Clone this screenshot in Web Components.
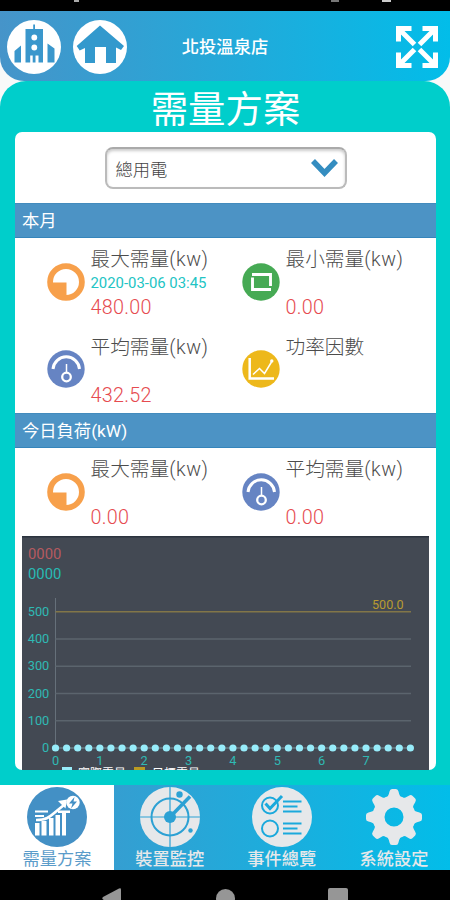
<!DOCTYPE html>
<html lang="zh-Hant">
<head>
<meta charset="utf-8">
<title>需量方案</title>
<style>
html,body{margin:0;padding:0}
body{width:450px;height:900px;overflow:hidden;background:#f8f9f9;font-family:Roboto,"Noto Sans CJK TC",sans-serif}
</style>
</head>
<body>
<energy-app></energy-app>
<script>
const define = (name, html) => {
  const t = document.createElement('template');
  t.innerHTML = html;
  customElements.define(name, class extends HTMLElement {
    constructor() {
      super();
      this.attachShadow({mode: 'open'}).append(t.content.cloneNode(true));
    }
  });
};

const ICONS = {
  building: ['0 0 54 54', `<circle cx="27" cy="27" r="27" fill="#fff"/><path fill="#3a97cc" d="M26.2 4.500h1.800V9h8v33.500h-4.500v-7h-3v7h-2.800v-7h-2.500v7h-4.700V9h7.700zM7.500 31l6.500-5.500v17H7.500zM40.500 23.500l7 5v14h-7z"/><g fill="#fff"><circle cx="27.300" cy="17.500" r="2.900"/><circle cx="27.300" cy="27.500" r="2.900"/></g>`],
  home: ['0 0 54 54', `<circle cx="27" cy="27" r="27" fill="#fff"/><path fill="#3399cd" d="M27 5.500L51 26l-3 4-5-2.500v15.500H33V27H22v16H12V28l-5.300 2.500-3-4.500z"/>`],
  expand: ['0 0 42 42', `<g fill="none" stroke="#fff" stroke-width="5"><path d="M2.500 15.500v-13h13M3 3l15.500 15.500M26.500 2.500h13v13M39 3L23.500 18.500M2.500 26.500v13h13M3 39l15.500-15.500M26.500 39.500h13v-13M39 39L23.500 23.500"/></g>`],
  pie: ['0 0 38 38', `<circle cx="19" cy="19" r="15.900" fill="#fff" stroke="#f7a04b" stroke-width="5.800"/><path fill="#f7a04b" d="M4 19.500h15.500V34C10 35 4 28 4 19.500z"/>`],
  square: ['0 0 38 38', `<circle cx="19" cy="19" r="18.700" fill="#46aa54"/><path fill="none" stroke="#fff" stroke-width="2.900" d="M10.500 14.500v12H29M10 11.500h18.500V23"/>`],
  gauge: ['0 0 38 38', `<circle cx="19" cy="19" r="18.700" fill="#6684c3"/><g fill="none" stroke="#fff"><path stroke-width="3" d="M6 19a13.300 13.300 0 0 1 26.500 0"/><path stroke-width="1.500" d="M19.500 14v9"/><circle stroke-width="2.300" cx="19.500" cy="27" r="4.300"/></g>`],
  trend: ['0 0 38 38', `<circle cx="19" cy="19" r="18.700" fill="#edb81b"/><g fill="none" stroke="#fff"><path stroke-width="2.500" d="M7.700 8v20.500H32"/><path stroke-width="1.500" d="M11 24.500l6.500-6 5 5L29.500 12"/></g><circle cx="29.800" cy="11" r="1.700" fill="#fff"/>`],
  chevron: ['0 0 27 19', `<path d="M2 3l11.500 12L25 3" fill="none" stroke="#348dc0" stroke-width="5.500"/>`],
  demand: ['0 0 60 60', `<circle cx="30" cy="30" r="30" fill="#4390c5"/><g fill="#fff"><path d="M8 36h4.500v12.500H8zM14.500 34h5v14.500h-5zM22 31h4.500v17.500H22zM28.500 28h4.500v20.500h-4.500zM35 25h4v23.500h-4zM8 23.500h13v2H8zM8 28h9v2H8zM31 23.500h12v2.500H31z"/><circle cx="46" cy="15.500" r="6.700"/><path d="M31 14l9-1.500-1.500 9z"/></g><path d="M9 33c13 0 14-4 28-15" fill="none" stroke="#fff" stroke-width="2.700"/><path d="M47.500 10l-5.500 6.500h3.500l-1.500 5 6-7H46.500z" fill="#4390c5"/>`],
  radar: ['0 0 60 60', `<circle cx="30" cy="30" r="30" fill="#e6e8ea"/><g stroke="#2ca1d4" fill="none"><path stroke-width="1.200" d="M30 0v60M0 30h60"/><circle cx="30" cy="30" r="18.500" stroke-width="2"/><path stroke-width="3.500" d="M32 28L50 9.500"/></g><g fill="#2ca1d4"><circle cx="30" cy="30" r="6"/><circle cx="39.500" cy="7.500" r="3.200"/><circle cx="50.500" cy="43.500" r="2.200"/></g>`],
  checklist: ['0 0 60 60', `<circle cx="30" cy="30" r="30" fill="#e6e8ea"/><g fill="none" stroke="#1aa9dc" stroke-width="2"><circle cx="18" cy="18.500" r="8"/><circle cx="18" cy="41.500" r="8"/><path stroke-width="3" d="M13.500 16.500l4.500 5L30 9"/><path d="M31 14.500h18.500M31 19.500h14.500M31 24.500h18.500M31 36.500h18.500M31 41.500h14.500M31 46.500h18.500"/></g>`],
  gear: ['0 0 60 60', (() => {
    let s = '<g fill="#e6e8ea">';
    for (let i = 0; i < 8; i++) s += `<path transform="rotate(${i * 45} 30 30)" d="M21 12q3.500-2 4.500-7.500.5-2.500 2.500-2.500h4q2 0 2.500 2.500Q35.500 10 39 12z"/>`;
    return s + '</g><circle cx="30" cy="30" r="15.500" fill="none" stroke="#e6e8ea" stroke-width="12"/>';
  })()]
};

customElements.define('ui-icon', class extends HTMLElement {
  constructor() { super(); this.attachShadow({mode: 'open'}); }
  connectedCallback() {
    const [box, art] = ICONS[this.getAttribute('name')];
    this.shadowRoot.innerHTML = `<style>:host{display:block;flex:none}svg{display:block;width:100%;height:100%;overflow:visible}</style><svg viewBox="${box}">${art}</svg>`;
  }
});

define('status-strip', `<style>
:host{display:flex;background:#000;height:11px;overflow:hidden}
svg{display:block}
</style><svg width="450" height="11"><path d="M74 0h5v2h-5z" fill="#aaa"/><path d="M331 0h8v2h-8z" fill="#777"/><path d="M382 0h9v2h-9z" fill="#ccc"/></svg>`);

define('app-header', `<style>
:host{display:grid;grid-template-columns:150px 150px 150px;align-items:center;height:70px;background:linear-gradient(90deg,#4694c9,#02bde9);border-radius:0 0 24px 24px;color:#fff}
.left{display:flex;gap:12.500px;padding:2px 0 0 6.500px}
.left ui-icon{width:54px;height:54px}
.name{text-align:center;font-size:17.300px;font-weight:500;line-height:26px;padding-top:2px}
.right{display:flex;justify-content:flex-end;padding:2px 12px 0 0}
.right ui-icon{width:42px;height:42px}
</style><div class="left"><ui-icon name="building"></ui-icon><ui-icon name="home"></ui-icon></div><div class="name"><slot></slot></div><div class="right"><ui-icon name="expand"></ui-icon></div>`);

define('select-box', `<style>
:host{display:flex;align-items:center;justify-content:space-between;box-sizing:border-box;width:242px;height:42px;border:2px solid #bbb;border-top-color:#aaa;border-radius:8px;padding:1px 7px 0 9px;box-shadow:inset 0 2px 3px #ccc;font-size:17.300px;font-weight:300;color:#444;background:#fff}
ui-icon{width:27px;height:19px;margin-top:-2px}
</style><span><slot></slot></span><ui-icon name="chevron"></ui-icon>`);

define('section-bar', `<style>
:host{display:block;box-sizing:border-box;height:35px;padding-left:7px;background:#4c93c5;color:#fff;font-size:17.300px;border-top:1px solid #438bbd;border-bottom:1px solid #3585bb;line-height:35px}
</style><slot></slot>`);

define('metric-row', `<style>
:host{display:grid;grid-template-columns:195px 1fr;height:87.500px;padding-left:31.500px}
</style><slot></slot>`);

customElements.define('metric-cell', class extends HTMLElement {
  constructor() { super(); this.attachShadow({mode: 'open'}); }
  connectedCallback() {
    const a = n => this.getAttribute(n) || '';
    this.shadowRoot.innerHTML = `<style>
:host{display:flex;gap:6px;white-space:nowrap}
ui-icon{width:38px;height:38px;margin-top:24.500px}
.text{padding-top:9px;font-weight:300}
.label{height:25px;line-height:26px;font-size:19.700px;color:#4c4c4c}
.latin{letter-spacing:.5px}
.time{height:22px;line-height:22px;font-size:14.900px;color:#22c4c4;font-weight:400}
.value{height:27px;line-height:27px;font-size:19.800px;letter-spacing:.3px;color:#e64b50}
</style><ui-icon name="${a('icon')}"></ui-icon><div class="text"><div class="label">${a('label').replace('(kw)', '<span class="latin">(kw)</span>')}</div><div class="time">${a('time')}</div><div class="value">${a('value')}</div></div>`;
  }
});

customElements.define('load-chart', class extends HTMLElement {
  constructor() { super(); this.attachShadow({mode: 'open'}); }
  connectedCallback() {
    const x0 = 33.5, y0 = 212, step = 11.09;
    let s = '';
    for (let i = 0; i <= 5; i++) {
      const y = y0 - i * 27.25;
      s += `<path d="M${x0} ${y}H389" stroke="${i === 5 ? '#827648' : '#5b646d'}" stroke-width="1.400"/>`;
      s += `<text x="27.300" y="${y + 4}" text-anchor="end" fill="#2fb9b3">${i * 100}</text>`;
    }
    for (let i = 0; i <= 32; i++) s += `<circle cx="${x0 + i * step}" cy="${y0}" r="3.600" fill="#97ecfa"/>`;
    for (let i = 0; i < 8; i++) s += `<text x="${x0 + i * step * 4}" y="${y0 + 17}" text-anchor="middle" fill="#2fb9b3">${i}</text>`;
    this.shadowRoot.innerHTML = `<style>
:host{display:block;margin:0 7px;width:407px;height:234px;background:#434953;overflow:hidden}
svg{display:block;font-size:12.800px}
</style><svg width="407" height="234">
<path d="M0 .7h407" stroke="#2b333e" stroke-width="1.400"/>
<text x="6" y="22.500" font-size="14.800" fill="#b65a60">0000</text>
<text x="6" y="43" font-size="14.800" fill="#27bbb5">0000</text>
<path d="M33.500 62v150" stroke="#66707a"/>
<path d="M33 212h356" stroke="#8ed5e2"/>
${s}
<text x="350" y="73" font-size="12.600" fill="#b89b31">500.0</text>
<rect x="40" y="231" width="10" height="9" fill="#97ecfa"/><text x="56" y="241.500" font-size="12" fill="#fff">實際需量</text>
<rect x="112" y="231" width="11" height="9" fill="#b99a22"/><text x="130" y="241.500" font-size="12" fill="#fff">目標需量</text>
</svg>`;
  }
});

define('demand-panel', `<style>
:host{display:block;box-sizing:border-box;height:704px;padding:0 14px 0 15px;background:#00cecb;border-radius:26px 26px 0 0}
h1{box-sizing:border-box;margin:0;height:51px;padding-top:2px;line-height:54px;font-size:37.400px;font-weight:400;color:#fff;text-align:center}
.card{height:638px;background:#fff;border-radius:7px;overflow:hidden}
.pick{display:flex;justify-content:center;height:56px;padding-top:15px}
</style><h1>需量方案</h1>
<div class="card">
<div class="pick"><select-box>總用電</select-box></div>
<section-bar>本月</section-bar>
<metric-row><metric-cell icon="pie" label="最大需量(kw)" time="2020-03-06 03:45" value="480.00"></metric-cell><metric-cell icon="square" label="最小需量(kw)" value="0.00"></metric-cell></metric-row>
<metric-row><metric-cell icon="gauge" label="平均需量(kw)" value="432.52"></metric-cell><metric-cell icon="trend" label="功率因數"></metric-cell></metric-row>
<section-bar>今日負荷(kW)</section-bar>
<metric-row><metric-cell icon="pie" label="最大需量(kw)" value="0.00"></metric-cell><metric-cell icon="gauge" label="平均需量(kw)" value="0.00"></metric-cell></metric-row>
<load-chart></load-chart>
</div>`);

customElements.define('nav-tab', class extends HTMLElement {
  constructor() { super(); this.attachShadow({mode: 'open'}); }
  connectedCallback() {
    this.shadowRoot.innerHTML = `<style>
:host{display:flex;flex-direction:column;align-items:center;padding-top:2px;color:#e6e8ea;font-size:17.200px;line-height:25px;font-weight:500}
:host([active]){background:#fff;color:#5b9cca;font-weight:400}
ui-icon{width:60px;height:60px}
</style><ui-icon name="${this.getAttribute('icon')}"></ui-icon><span><slot></slot></span>`;
  }
});

define('tab-bar', `<style>
:host{display:grid;grid-template-columns:114px 111.500px 112.500px 112px;height:85px;background:linear-gradient(90deg,#4694c9,#02bde9)}
</style><slot></slot>`);

define('system-nav', `<style>:host{display:block;height:30px;background:#000}svg{display:block}</style>
<svg width="450" height="30"><g fill="#969696"><path d="M103 27L119 18.500q2-1 2 1v17.500q0 2-2 1L103 29.500q-1.500-1.200 0-2.500z"/><circle cx="225.500" cy="28.500" r="9.500"/><rect x="328" y="18" width="20" height="20" rx="2"/></g></svg>`);

define('energy-app', `<style>:host{display:flex;flex-direction:column;width:450px;height:900px;overflow:hidden}</style>
<status-strip></status-strip>
<app-header>北投溫泉店</app-header>
<demand-panel></demand-panel>
<tab-bar><nav-tab icon="demand" active>需量方案</nav-tab><nav-tab icon="radar">裝置監控</nav-tab><nav-tab icon="checklist">事件總覽</nav-tab><nav-tab icon="gear">系統設定</nav-tab></tab-bar>
<system-nav></system-nav>`);
</script>
</body>
</html>
